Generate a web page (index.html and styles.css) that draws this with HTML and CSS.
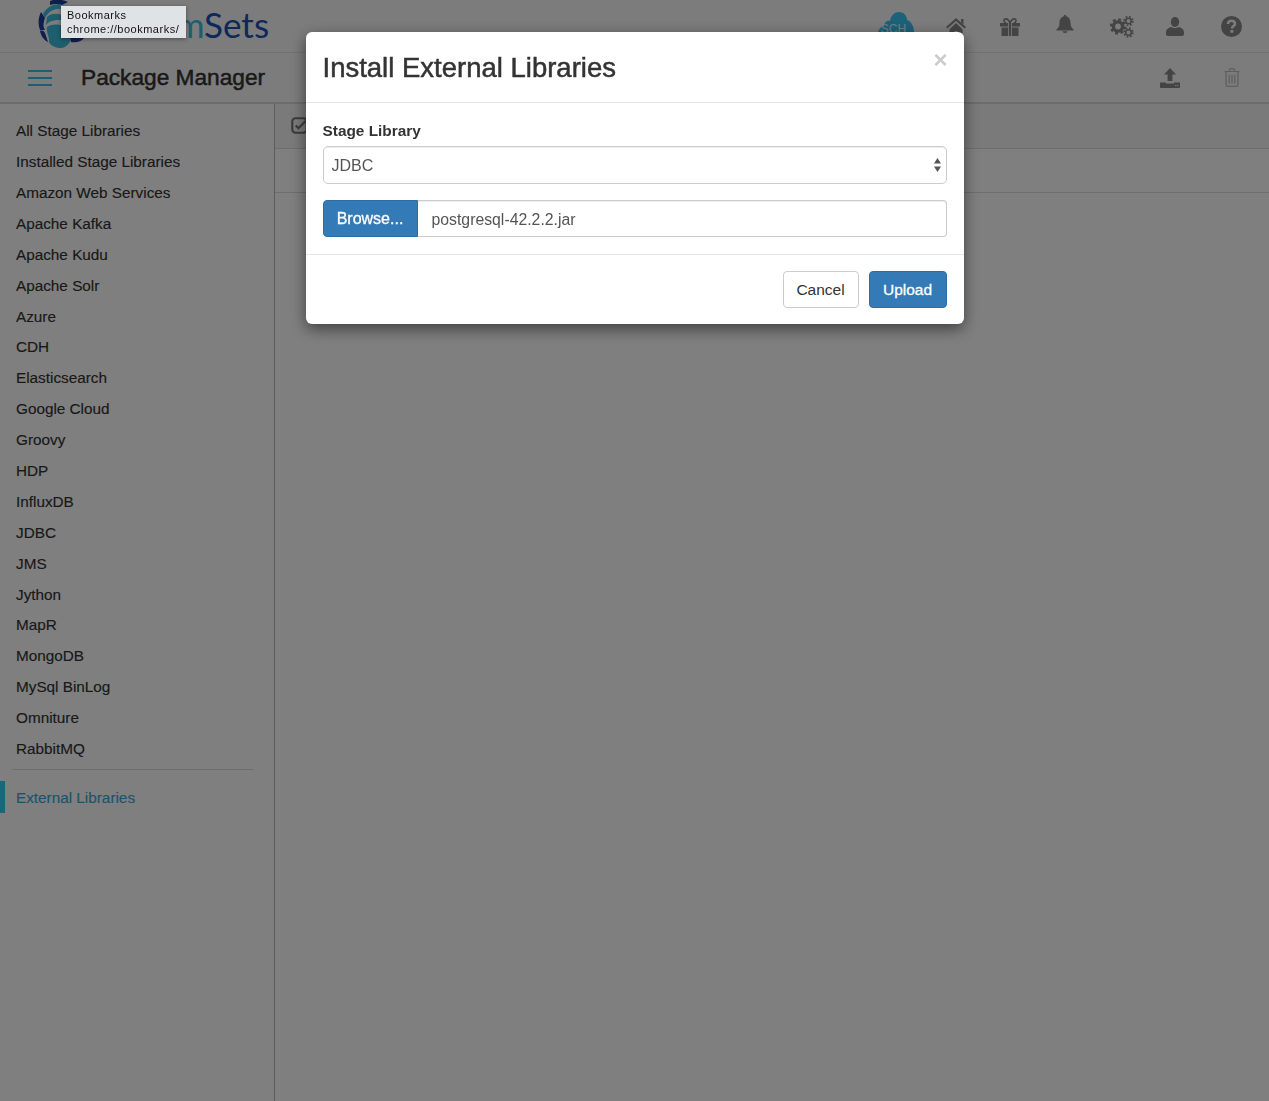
FILE: index.html
```html
<!DOCTYPE html>
<html lang="en">
<head>
    <meta charset="UTF-8">
    <meta name="viewport" content="width=device-width, initial-scale=1.0">
    <title>Package Manager</title>
    <link rel="stylesheet" href="styles.css">
</head>
<body>
    <div class="app">
        <header class="topbar">
            <div class="brand">
                <svg class="brand-mark" viewBox="0 0 48 48" aria-hidden="true">
                    <path class="mark-navy" d="M12 1C16 -1 24 -1 30 2L24 5C20 3.500 16 3.500 12 5Z"/>
                    <path class="mark-teal" d="M5 14C8 8 14 4 22 4L24 9C16 8 10 12 7 18Z"/>
                    <path class="mark-navy" d="M3 12L7 18C5 24 5 27 7 30L2 30C0 24 0 18 3 12Z"/>
                    <path class="mark-teal" d="M9 17C13 13 18 13 24 15V20C18 20 12 20 8 25Z"/>
                    <path class="mark-navy" d="M2 31C4 30 6 31 7 33L10 42C6 40 3 36 2 31Z"/>
                    <path class="mark-teal" d="M9 27C14 24 20 24 24 26V48C18 48 13 46 11 42C12 38 8 32 9 27Z"/>
                    <path class="mark-teal" d="M24 38H32C33 42 30 46 24 48Z"/>
                    <path class="mark-navy" d="M32 38H46C43 42 38 43 33 42Z"/>
                </svg>
                <span class="brand-name"><span class="brand-first">Stream</span>Sets</span>
            </div>
            <nav class="topbar-tools">
                <svg class="icon-cloud" viewBox="0 0 36 30" aria-hidden="true">
                    <path d="M7 30C3 30 0 27 0 22C0 18 2 15 6 14C6 11 9 8 12 9C13 3 17 0 21 0C26 0 29 4 29 8C33 9 36 14 36 20C36 26 33 30 28 30Z"/>
                    <text x="15.500" y="21">SCH</text>
                </svg>
                <svg class="icon-tool icon-home" viewBox="0 0 20 18" aria-hidden="true">
                    <path d="M10 0L20 9L18.6 10.5L10 3L1.4 10.5L0 9Z"/>
                    <path d="M15 1H17.5V6.5L15 4.2Z"/>
                    <path d="M3.5 11.2L10 5L16.5 11.2V18H11.5V13H8.5V18H3.5Z"/>
                </svg>
                <svg class="icon-tool icon-gift" viewBox="0 0 20 18" aria-hidden="true">
                    <path d="M0 5H8V8.5H0ZM12 5H20V8.5H12ZM8.8 5H11.2V18H8.8ZM1.5 9.5H8V18H1.5ZM12 9.5H18.5V18H12Z"/>
                    <path class="gift-bow" d="M10 5C8.5 1.5 6.5 .5 5 1C3.4 1.6 3.6 4.2 6 5M10 5C11.5 1.5 13.5 .5 15 1C16.6 1.6 16.4 4.2 14 5"/>
                </svg>
                <svg class="icon-tool icon-bell" viewBox="0 0 18 18" aria-hidden="true">
                    <path d="M9 0C10 0 10.5 .7 10.5 1.5C13.5 2.2 14.5 5 14.5 8C14.5 11 15.5 13 17.5 14.3V15.5H.5V14.3C2.5 13 3.5 11 3.5 8C3.5 5 4.5 2.2 7.5 1.5C7.5 .7 8 0 9 0Z"/>
                    <path d="M6.5 16.2H11.5A2.5 1.8 0 0 1 6.5 16.2Z"/>
                </svg>
                <svg class="icon-tool icon-cogs" viewBox="0 0 24 22" aria-hidden="true">
                    <circle class="gear-body" cx="8" cy="10.5" r="4.6" stroke-width="3.4"/>
                    <circle class="gear-teeth" cx="8" cy="10.5" r="7" stroke-width="2.4" stroke-dasharray="2.75 2.75"/>
                    <circle class="gear-body" cx="18.5" cy="5" r="2.8" stroke-width="1.6"/>
                    <circle class="gear-teeth" cx="18.5" cy="5" r="4.4" stroke-width="1.6" stroke-dasharray="1.73 1.73"/>
                    <circle class="gear-body" cx="18.5" cy="16.5" r="2.8" stroke-width="1.6"/>
                    <circle class="gear-teeth" cx="18.5" cy="16.5" r="4.4" stroke-width="1.6" stroke-dasharray="1.73 1.73"/>
                </svg>
                <svg class="icon-tool icon-user" viewBox="0 0 18 19" aria-hidden="true">
                    <ellipse cx="9" cy="5" rx="4.2" ry="5"/>
                    <path d="M0 15.5C0 12 3 10.5 5.5 10C7 11.5 11 11.5 12.5 10C15 10.5 18 12 18 15.5V17C18 18.2 17.2 19 16 19H2C.8 19 0 18.2 0 17Z"/>
                </svg>
                <svg class="icon-tool icon-help" viewBox="0 0 21 21" aria-hidden="true">
                    <circle cx="10.5" cy="10.5" r="10.5"/>
                    <path class="help-mark" d="M7 8C7 5.8 8.6 4.8 10.5 4.8C12.6 4.8 14 6 14 7.7C14 10 11 10 11 12.5"/>
                    <rect class="help-dot" x="9.4" y="14" width="3" height="2.8" rx=".5"/>
                </svg>
            </nav>
        </header>

        <div class="subbar">
            <div class="hamburger"><span></span><span></span><span></span></div>
            <h1 class="page-title">Package Manager</h1>
            <div class="subbar-tools">
                <svg class="icon-upload" viewBox="0 0 20 20" aria-hidden="true">
                    <path d="M10 0L16 6.5H12.4V13H7.6V6.5H4Z"/>
                    <path d="M0 14.5H6V15.5H14V14.5H20V19C20 19.6 19.6 20 19 20H1C.4 20 0 19.6 0 19Z"/>
                    <rect class="tray-dot" x="15.2" y="17" width="1.2" height="1.2"/>
                    <rect class="tray-dot" x="17.2" y="17" width="1.2" height="1.2"/>
                </svg>
                <svg class="icon-trash" viewBox="0 0 16 19" aria-hidden="true">
                    <path d="M.5 3.5H15.5M5.5 3.5V1.5C5.5 1 6 .6 6.5 .6H9.5C10 .6 10.5 1 10.5 1.5V3.5M2 3.5V16.8C2 17.7 2.6 18.4 3.4 18.4H12.6C13.4 18.4 14 17.7 14 16.8V3.5M5.2 6.5V15.5M8 6.5V15.5M10.8 6.5V15.5"/>
                </svg>
            </div>
        </div>

        <div class="workspace">
            <aside class="sidebar">
                <ul class="lib-list">
                    <li>All Stage Libraries</li>
                    <li>Installed Stage Libraries</li>
                    <li>Amazon Web Services</li>
                    <li>Apache Kafka</li>
                    <li>Apache Kudu</li>
                    <li>Apache Solr</li>
                    <li>Azure</li>
                    <li>CDH</li>
                    <li>Elasticsearch</li>
                    <li>Google Cloud</li>
                    <li>Groovy</li>
                    <li>HDP</li>
                    <li>InfluxDB</li>
                    <li>JDBC</li>
                    <li>JMS</li>
                    <li>Jython</li>
                    <li>MapR</li>
                    <li>MongoDB</li>
                    <li>MySql BinLog</li>
                    <li>Omniture</li>
                    <li>RabbitMQ</li>
                </ul>
                <div class="lib-divider"></div>
                <div class="lib-active">External Libraries</div>
            </aside>
            <main class="content">
                <div class="content-toolbar">
                    <svg class="icon-check" viewBox="0 0 16 16" aria-hidden="true">
                        <rect x="1.2" y="1.2" width="13.6" height="13.6" rx="3"/>
                        <path d="M4.5 8L7 10.5L14 3.5"/>
                    </svg>
                </div>
                <div class="content-head"></div>
            </main>
        </div>
    </div>

    <div class="tooltip">Bookmarks<br>chrome://bookmarks/</div>

    <div class="backdrop">
        <div class="modal">
            <div class="modal-head">
                <h2 class="modal-title">Install External Libraries</h2>
                <span class="modal-close">&times;</span>
            </div>
            <div class="modal-body">
                <label class="field-label" for="stageLibrary">Stage Library</label>
                <div class="select-wrap">
                    <select class="field-select" id="stageLibrary">
                        <option>JDBC</option>
                    </select>
                    <svg class="select-arrows" viewBox="0 0 7 14" aria-hidden="true">
                        <path d="M3.5 0L7 5.5H0ZM3.5 14L0 8.5H7Z"/>
                    </svg>
                </div>
                <div class="file-row">
                    <button class="btn btn-primary btn-browse">Browse...</button>
                    <input class="file-name" type="text" value="postgresql-42.2.2.jar" readonly>
                </div>
            </div>
            <div class="modal-foot">
                <button class="btn btn-default">Cancel</button>
                <button class="btn btn-primary">Upload</button>
            </div>
        </div>
    </div>
</body>
</html>
```

FILE: styles.css
```css
* {
    box-sizing: border-box;
}
html, body {
    height: 100%;
}
body {
    margin: 0;
    overflow: hidden;
    font-family: "Liberation Sans", Arial, sans-serif;
    font-size: 15.3px;
    color: #333;
    background-color: #fff;
}
.app {
    display: flex;
    flex-direction: column;
    height: 100%;
}

/* top bar */
.topbar {
    display: flex;
    justify-content: space-between;
    height: 53px;
    background-color: #f8f8f8;
    border-bottom: 1px solid #e4e4e4;
}
.brand {
    display: flex;
    padding-left: 38px;
}
.brand-mark {
    width: 48px;
    height: 48px;
}
.mark-teal {
    fill: #3cbcdc;
}
.mark-navy {
    fill: #1c3f9c;
}
.brand-name {
    margin-left: 11px;
    font-family: Lato, sans-serif;
    font-size: 35px;
    line-height: 48px;
    color: #1e50b4;
}
.brand-first {
    color: #3cbcdc;
}
.topbar-tools {
    display: grid;
    grid-template-columns: 61px 59px 50px 59px 56px 50px 63px;
    justify-items: center;
    align-items: start;
    padding-right: 6px;
}
.icon-cloud {
    width: 36px;
    height: 30px;
    margin-top: 12px;
    fill: #36c4f4;
}
.icon-cloud text {
    font-family: "Liberation Sans", sans-serif;
    font-size: 12px;
    text-anchor: middle;
    fill: #e8f8ff;
}
.icon-tool {
    fill: #888;
}
.icon-home {
    width: 20px;
    height: 18px;
    margin-top: 18px;
}
.icon-gift {
    width: 20px;
    height: 18px;
    margin-top: 18px;
}
.gift-bow {
    fill: none;
    stroke: #888;
    stroke-width: 1.6;
}
.icon-bell {
    width: 18px;
    height: 18px;
    margin-top: 15px;
}
.icon-cogs {
    width: 24px;
    height: 22px;
    margin-top: 16px;
}
.gear-body, .gear-teeth {
    fill: none;
    stroke: #888;
}
.icon-user {
    width: 18px;
    height: 19px;
    margin-top: 17px;
}
.icon-help {
    width: 21px;
    height: 21px;
    margin-top: 16px;
}
.help-mark {
    fill: none;
    stroke: #f8f8f8;
    stroke-width: 2.6;
}
.help-dot {
    fill: #f8f8f8;
}

/* page title bar */
.subbar {
    display: flex;
    align-items: center;
    height: 51px;
    padding: 0 28px;
    background-color: #f8f8f8;
    border-bottom: 2px solid #d8d8d8;
}
.hamburger {
    display: flex;
    flex-direction: column;
    justify-content: space-between;
    width: 24px;
    height: 16px;
}
.hamburger span {
    height: 2px;
    background-color: #38bfe8;
}
.page-title {
    margin: 0 0 0 29px;
    font-size: 22.7px;
    font-weight: normal;
    -webkit-text-stroke: 0.5px #333;
}
.subbar-tools {
    display: flex;
    align-items: center;
    margin-left: auto;
    padding-right: 1px;
}
.icon-upload {
    width: 20px;
    height: 20px;
    fill: #888;
}
.tray-dot {
    fill: #f8f8f8;
}
.icon-trash {
    width: 16px;
    height: 19px;
    margin-left: 44px;
    fill: none;
    stroke: #bbb;
    stroke-width: 1.2;
}

/* sidebar */
.workspace {
    display: flex;
    flex: 1;
}
.sidebar {
    width: 275px;
    padding-top: 12.2px;
    background-color: #fff;
    border-right: 1px solid #bbb;
    -webkit-text-stroke: 0.15px currentColor;
}
.lib-list {
    margin: 0;
    padding: 0;
    list-style: none;
}
.lib-list li {
    height: 30.9px;
    padding-left: 16px;
    line-height: 30.9px;
}
.lib-divider {
    height: 1px;
    margin: 3.8px 20px 11px 12px;
    background-color: #ddd;
}
.lib-active {
    height: 32px;
    padding-left: 11px;
    line-height: 33px;
    color: #3ba8d8;
    border-left: 5px solid #30d0f8;
}

/* main area */
.content {
    flex: 1;
}
.content-toolbar {
    height: 45px;
    padding: 13px 0 0 16px;
    background-color: #f4f4f4;
    border-bottom: 1px solid #ddd;
}
.icon-check {
    display: block;
    width: 17px;
    height: 17px;
    fill: none;
    stroke: #777;
    stroke-width: 2;
}
.content-head {
    height: 44px;
    border-bottom: 1px solid #ddd;
}

/* chrome link tooltip */
.tooltip {
    position: absolute;
    z-index: 20;
    left: 61px;
    top: 6px;
    width: 125px;
    height: 32px;
    padding: 2px 0 0 6px;
    font-size: 11px;
    line-height: 14px;
    letter-spacing: 0.5px;
    color: #111;
    background-color: #dfe3e5;
    box-shadow: 0 1px 4px rgba(0, 0, 0, 0.4);
}

/* modal */
.backdrop {
    position: fixed;
    z-index: 10;
    top: 0;
    left: 0;
    right: 0;
    bottom: 0;
    display: flex;
    justify-content: center;
    align-items: flex-start;
    background-color: rgba(0, 0, 0, 0.5);
}
.modal {
    width: 658px;
    margin-top: 32px;
    background-color: #fff;
    border-radius: 6px;
    box-shadow: 0 5px 15px rgba(0, 0, 0, 0.5);
}
.modal-head {
    position: relative;
    height: 71px;
    padding: 18px 17px 0;
    border-bottom: 1px solid #e5e5e5;
}
.modal-title {
    margin: 0;
    font-size: 27.5px;
    font-weight: normal;
    line-height: 36px;
    -webkit-text-stroke: 0.5px #333;
}
.modal-close {
    position: absolute;
    top: 15px;
    right: 16px;
    font-size: 24px;
    font-weight: bold;
    line-height: 26px;
    color: #ccc;
}
.modal-body {
    height: 152px;
    padding: 18px 17px 0;
    border-bottom: 1px solid #e5e5e5;
}
.field-label {
    display: block;
    margin-bottom: 5px;
    font-size: 15.4px;
    font-weight: bold;
    line-height: 20px;
}
.select-wrap {
    position: relative;
    margin-bottom: 16px;
}
.field-select {
    display: block;
    width: 100%;
    height: 38px;
    padding: 0 8px;
    font-family: inherit;
    font-size: 16px;
    color: #555;
    background-color: #fff;
    border: 1px solid #ccc;
    border-radius: 5px;
    box-shadow: inset 0 1px 1px rgba(0, 0, 0, 0.075);
    appearance: none;
}
.select-arrows {
    position: absolute;
    top: 12px;
    right: 6px;
    width: 7px;
    height: 14px;
    fill: #555;
}
.file-row {
    display: flex;
    height: 37px;
}
.btn {
    height: 37px;
    min-width: 76px;
    padding: 0 12px;
    font-family: inherit;
    font-size: 15.5px;
    border: 1px solid transparent;
    border-radius: 4px;
}
.btn-primary {
    min-width: 78px;
    color: #fff;
    background-color: #337ab7;
    border-color: #2e6da4;
    -webkit-text-stroke: 0.3px #fff;
}
.btn-default {
    color: #333;
    background-color: #fff;
    border-color: #ccc;
}
.btn-browse {
    width: 95px;
    padding: 0;
    font-size: 16px;
    border-radius: 4px 0 0 4px;
}
.file-name {
    flex: 1;
    min-width: 0;
    padding: 2px 15px 0 14px;
    font-family: inherit;
    font-size: 15.8px;
    color: #555;
    border: 1px solid #ccc;
    border-left: 0;
    border-radius: 0 4px 4px 0;
    box-shadow: inset 0 1px 1px rgba(0, 0, 0, 0.075);
}
.modal-foot {
    display: flex;
    justify-content: flex-end;
    gap: 10px;
    height: 69px;
    padding: 16px 17px 0;
}
```
